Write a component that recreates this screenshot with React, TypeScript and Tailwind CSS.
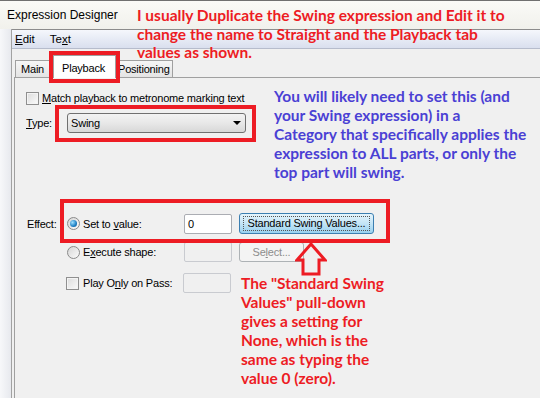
const ui = { fontFamily: '"Liberation Sans", Arial, sans-serif' };
const note = { fontFamily: 'Lato, "Liberation Sans", sans-serif' };

const Checkbox = () => (
  <span className="inline-block w-[13px] h-[13px] border border-[#8f8f8f] bg-gradient-to-br from-[#dcdcdc] to-[#fbfbfb] shadow-[inset_0_0_0_1px_#f4f4f4] shrink-0" />
);

const Radio = ({ checked }: { checked?: boolean }) => (
  <span className="w-[13px] h-[13px] rounded-full border border-[#8a8a8a] bg-gradient-to-br from-[#d6d6d6] to-[#fbfbfb] flex items-center justify-center shrink-0">
    {checked && (
      <span className="w-[7px] h-[7px] rounded-full bg-[radial-gradient(circle_at_35%_35%,#9fe0ff,#1c7fc4_60%,#0d4f8a)]" />
    )}
  </span>
);

const Field = ({ value }: { value?: string }) => (
  <div className="w-[48px] h-[20px] border border-[#abadb3] bg-white rounded-[2px] text-[11px] pl-[3px] leading-[18px]">
    {value}
  </div>
);

const DisabledField = () => (
  <div className="w-[48px] h-[20px] border border-[#c9cbd0] bg-[#f0f0f0] rounded-[2px]" />
);

export default function App() {
  return (
    <div
      className="relative w-[540px] h-[398px] overflow-hidden bg-[#f0f0f0] text-black text-[11px] leading-[16px] tracking-[-0.2px]"
      style={ui}
    >
      {/* title bar */}
      <div className="h-[29px] bg-gradient-to-b from-[#fafaf7] to-[#f1f1ec] border-t border-[#707070] flex items-center pl-[7px] text-[12px] tracking-normal">
        Expression Designer
      </div>

      <div className="flex h-[369px]">
        <div className="w-[12px] bg-gradient-to-r from-[#f7f8fa] to-[#e7e9ee] border-r border-[#a2a2a2]" />
        <div className="flex-1 flex flex-col border-t border-[#8c8c8c]">
          {/* menu */}
          <div className="h-[19px] bg-gradient-to-b from-[#f5f7fc] to-[#d9dfee] border-b border-[#b6bccc] flex items-center gap-[12px] pl-[2px] text-[11.5px] tracking-normal">
            <span className="px-[1px]">
              <u>E</u>dit
            </span>
            <span className="ml-[2px]">
              Te<u>x</u>t
            </span>
          </div>

          {/* tabs */}
          <div className="flex items-end h-[28px] pl-[3px]">
            <div className="h-[17px] w-[38px] border border-b-0 border-[#a0a0a0] bg-gradient-to-b from-[#f6f6f6] to-[#e4e4e4] flex items-center pl-[5px]">
              Main
            </div>
            <div className="h-[23px] w-[63px] border border-b-0 border-[#a0a0a0] bg-white flex items-start pt-[4px] pl-[8px] -mb-[1px] z-10">
              Playback
            </div>
            <div className="h-[17px] w-[57px] border border-b-0 border-l-0 border-[#a0a0a0] bg-gradient-to-b from-[#f6f6f6] to-[#e4e4e4] flex items-center pl-[2px]">
              Positioning
            </div>
          </div>

          {/* panel */}
          <div className="flex-1 ml-[2px] border-t border-l border-[#a0a0a0] bg-[#f0f0f0] pl-[11px]">
            <div className="flex items-center gap-[3px] mt-[12px] h-[16px]">
              <Checkbox />
              <span>
                <u>M</u>atch playback to metronome marking text
              </span>
            </div>

            <div className="flex items-center mt-[7px] h-[20px]">
              <span className="w-[41px]">
                <u>T</u>ype:
              </span>
              <div className="w-[179px] h-[20px] rounded-[3px] border border-[#707070] bg-gradient-to-b from-[#f3f3f3] via-[#e8e8e8] to-[#d8d8d8] flex items-center justify-between pl-[3px] pr-[4px]">
                <span>Swing</span>
                <span className="w-0 h-0 border-l-[4px] border-r-[4px] border-t-[4px] border-l-transparent border-r-transparent border-t-black" />
              </div>
            </div>

            <div className="flex items-center mt-[80px] h-[21px]">
              <span className="w-[41px] pl-[1px]">Effect:</span>
              <Radio checked />
              <span className="w-[104px] pl-[3px]">
                Set to <u>v</u>alue:
              </span>
              <Field value="0" />
              <div className="ml-[7px] w-[135px] h-[21px] rounded-[3px] border border-[#3c7fb1] bg-gradient-to-b from-[#e5f4fc] via-[#c4e5f6] to-[#98d1ef] flex items-center justify-center">
                <span className="border border-dotted border-[#555] px-[4px] leading-[13px]">
                  Standard Swin<u>g</u> Values...
                </span>
              </div>
            </div>

            <div className="flex items-center mt-[8px] h-[20px]">
              <span className="w-[41px]" />
              <Radio />
              <span className="w-[104px] pl-[3px]">
                E<u>x</u>ecute shape:
              </span>
              <DisabledField />
              <div className="ml-[7px] w-[65px] h-[20px] rounded-[3px] border border-[#adb2b5] bg-[#f4f4f4] text-[#8d8d8d] flex items-center justify-center">
                Se<u>l</u>ect...
              </div>
            </div>

            <div className="flex items-center mt-[11px] h-[20px]">
              <span className="w-[40px]" />
              <Checkbox />
              <span className="w-[104px] pl-[4px]">
                Play O<u>n</u>ly on Pass:
              </span>
              <DisabledField />
            </div>
          </div>
        </div>
      </div>

      {/* annotations */}
      <div
        className="absolute left-[137px] top-[6px] text-[15.5px] leading-[18.5px] tracking-normal font-bold text-[#ed1c24]"
        style={note}
      >
        I usually Duplicate the Swing expression and Edit it to
        <br />
        change the name to Straight and the Playback tab
        <br />
        values as shown.
      </div>

      <div
        className="absolute left-[274px] top-[87px] text-[15.5px] leading-[19px] tracking-normal font-bold text-[#4a40d4]"
        style={note}
      >
        You will likely need to set this (and
        <br />
        your Swing expression) in a
        <br />
        Category that specifically applies the
        <br />
        expression to ALL parts, or only the
        <br />
        top part will swing.
      </div>

      <div
        className="absolute left-[241px] top-[274px] text-[15.5px] leading-[19px] tracking-normal font-bold text-[#ed1c24]"
        style={note}
      >
        The "Standard Swing
        <br />
        Values" pull-down
        <br />
        gives a setting for
        <br />
        None, which is the
        <br />
        same as typing the
        <br />
        value 0 (zero).
      </div>

      <div className="absolute left-[49px] top-[51px] w-[71px] h-[32px] border-4 border-[#ed1c24]" />
      <div className="absolute left-[55px] top-[105px] w-[201px] h-[37px] border-4 border-[#ed1c24]" />
      <div className="absolute left-[60px] top-[199px] w-[330px] h-[44px] border-4 border-[#ed1c24]" />

      <svg className="absolute left-[295px] top-[241px]" width="32" height="36" viewBox="0 0 32 36">
        <path
          d="M16 3 L30 19 L24 19 L24 33 L8 33 L8 19 L2 19 Z"
          fill="none"
          stroke="#ed1c24"
          strokeWidth="3"
        />
      </svg>
    </div>
  );
}
